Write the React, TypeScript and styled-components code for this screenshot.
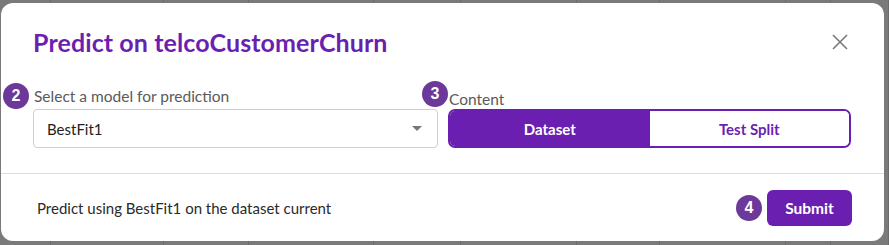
import React from "react";
import styled, { createGlobalStyle } from "styled-components";

const Global = createGlobalStyle`
  html, body { margin: 0; padding: 0; background: #7a7a7a; }
  body { font-family: "Lato", "Open Sans", sans-serif; }
  * { box-sizing: border-box; }
`;

const PURPLE = "#6b1fb1";

const Page = styled.div`
  position: relative;
  width: 889px;
  height: 245px;
  padding: 3px 5px 4px 1px;
  overflow: hidden;
`;

const Backdrop = styled.div`
  position: absolute;
  inset: 0;
  display: flex;
  pointer-events: none;
`;

const BackCol = styled.div<{ $w: number }>`
  width: ${(p) => p.$w}px;
  flex: none;
  border-right: 1px solid #6b6b6b;
`;

const Modal = styled.div`
  position: relative;
  height: 238px;
  background: #fff;
  border-radius: 12px;
  display: flex;
  flex-direction: column;
`;

const Header = styled.div`
  display: flex;
  align-items: center;
  justify-content: space-between;
  padding: 24px 36px 0 32px;
  height: 54px;
`;

const Title = styled.h2`
  margin: 0;
  font-family: "Lato", "Open Sans", sans-serif;
  font-size: 25px;
  line-height: 30px;
  font-weight: 700;
  letter-spacing: 0.1px;
  color: ${PURPLE};
`;

const CloseButton = styled.button`
  border: none;
  background: none;
  padding: 0;
  width: 16px;
  height: 16px;
  display: flex;
  align-items: center;
  justify-content: center;
  cursor: pointer;
`;

const Body = styled.div`
  display: flex;
  gap: 10px;
  padding: 29px 33px 0 32px;
  height: 116px;
`;

const Field = styled.div<{ $w: number }>`
  position: relative;
  width: ${(p) => p.$w}px;
  display: flex;
  flex-direction: column;
`;

const Label = styled.div<{ $shift: number }>`
  font-size: 15.5px;
  line-height: 20px;
  height: 23px;
  color: #5a5a5a;
  padding-left: 1px;
  padding-top: ${(p) => p.$shift}px;
`;

const Select = styled.div`
  height: 39px;
  border: 1px solid #cfcfcf;
  border-radius: 4px;
  display: flex;
  align-items: center;
  justify-content: space-between;
  padding: 0 15px 0 13px;
  font-size: 15px;
  color: #222;
`;

const Segmented = styled.div`
  height: 39px;
  border: 2px solid ${PURPLE};
  border-radius: 7px;
  display: flex;
  overflow: hidden;
`;

const Segment = styled.button<{ $active: boolean }>`
  flex: 1;
  border: none;
  margin: 0;
  font-family: inherit;
  font-size: 15px;
  font-weight: 700;
  background: ${(p) => (p.$active ? PURPLE : "#fff")};
  color: ${(p) => (p.$active ? "#fff" : PURPLE)};
  cursor: pointer;
`;

const Divider = styled.div`
  height: 1px;
  background: #dedede;
`;

const Footer = styled.div`
  position: relative;
  flex: 1;
  display: flex;
  align-items: center;
  justify-content: space-between;
  padding: 0 32px 0 36px;
`;

const FooterText = styled.div`
  font-size: 15px;
  color: #2a2a2a;
`;

const Submit = styled.button`
  width: 85px;
  height: 36px;
  border: none;
  border-radius: 6px;
  background: ${PURPLE};
  color: #fff;
  font-family: inherit;
  font-size: 15.5px;
  font-weight: 700;
  cursor: pointer;
`;

const Badge = styled.div<{ $left: number; $top: number }>`
  position: absolute;
  left: ${(p) => p.$left}px;
  top: ${(p) => p.$top}px;
  width: 26px;
  height: 26px;
  border-radius: 50%;
  background: #6c3899;
  color: #fff;
  font-family: "Liberation Sans", Arial, sans-serif;
  font-weight: 700;
  font-size: 16px;
  display: flex;
  align-items: center;
  justify-content: center;
  z-index: 2;
`;

const cols = [51, 113, 85, 125, 87, 116, 83, 126, 45, 58];

export default function App() {
  return (
    <>
      <Global />
      <Page>
        <Backdrop>
          {cols.map((w, i) => (
            <BackCol key={i} $w={w} />
          ))}
        </Backdrop>
        <Modal>
          <Header>
            <Title>Predict on telcoCustomerChurn</Title>
            <CloseButton aria-label="Close">
              <svg width="16" height="16" viewBox="0 0 16 16">
                <path d="M1 1 L15 15 M15 1 L1 15" stroke="#7a7a7a" strokeWidth="1.6" fill="none" />
              </svg>
            </CloseButton>
          </Header>
          <Body>
            <Field $w={405}>
              <Badge $left={-30} $top={-3}>2</Badge>
              <Label $shift={0}>Select a model for prediction</Label>
              <Select>
                <span>BestFit1</span>
                <svg width="10" height="6" viewBox="0 0 10 6">
                  <path d="M0 0 L10 0 L5 5 Z" fill="#777" />
                </svg>
              </Select>
            </Field>
            <Field $w={403}>
              <Badge $left={-26} $top={-5}>3</Badge>
              <Label $shift={3}>Content</Label>
              <Segmented>
                <Segment $active>Dataset</Segment>
                <Segment $active={false}>Test Split</Segment>
              </Segmented>
            </Field>
          </Body>
          <Divider />
          <Footer>
            <FooterText>Predict using BestFit1 on the dataset current</FooterText>
            <Badge $left={735} $top={21}>4</Badge>
            <Submit>Submit</Submit>
          </Footer>
        </Modal>
      </Page>
    </>
  );
}
